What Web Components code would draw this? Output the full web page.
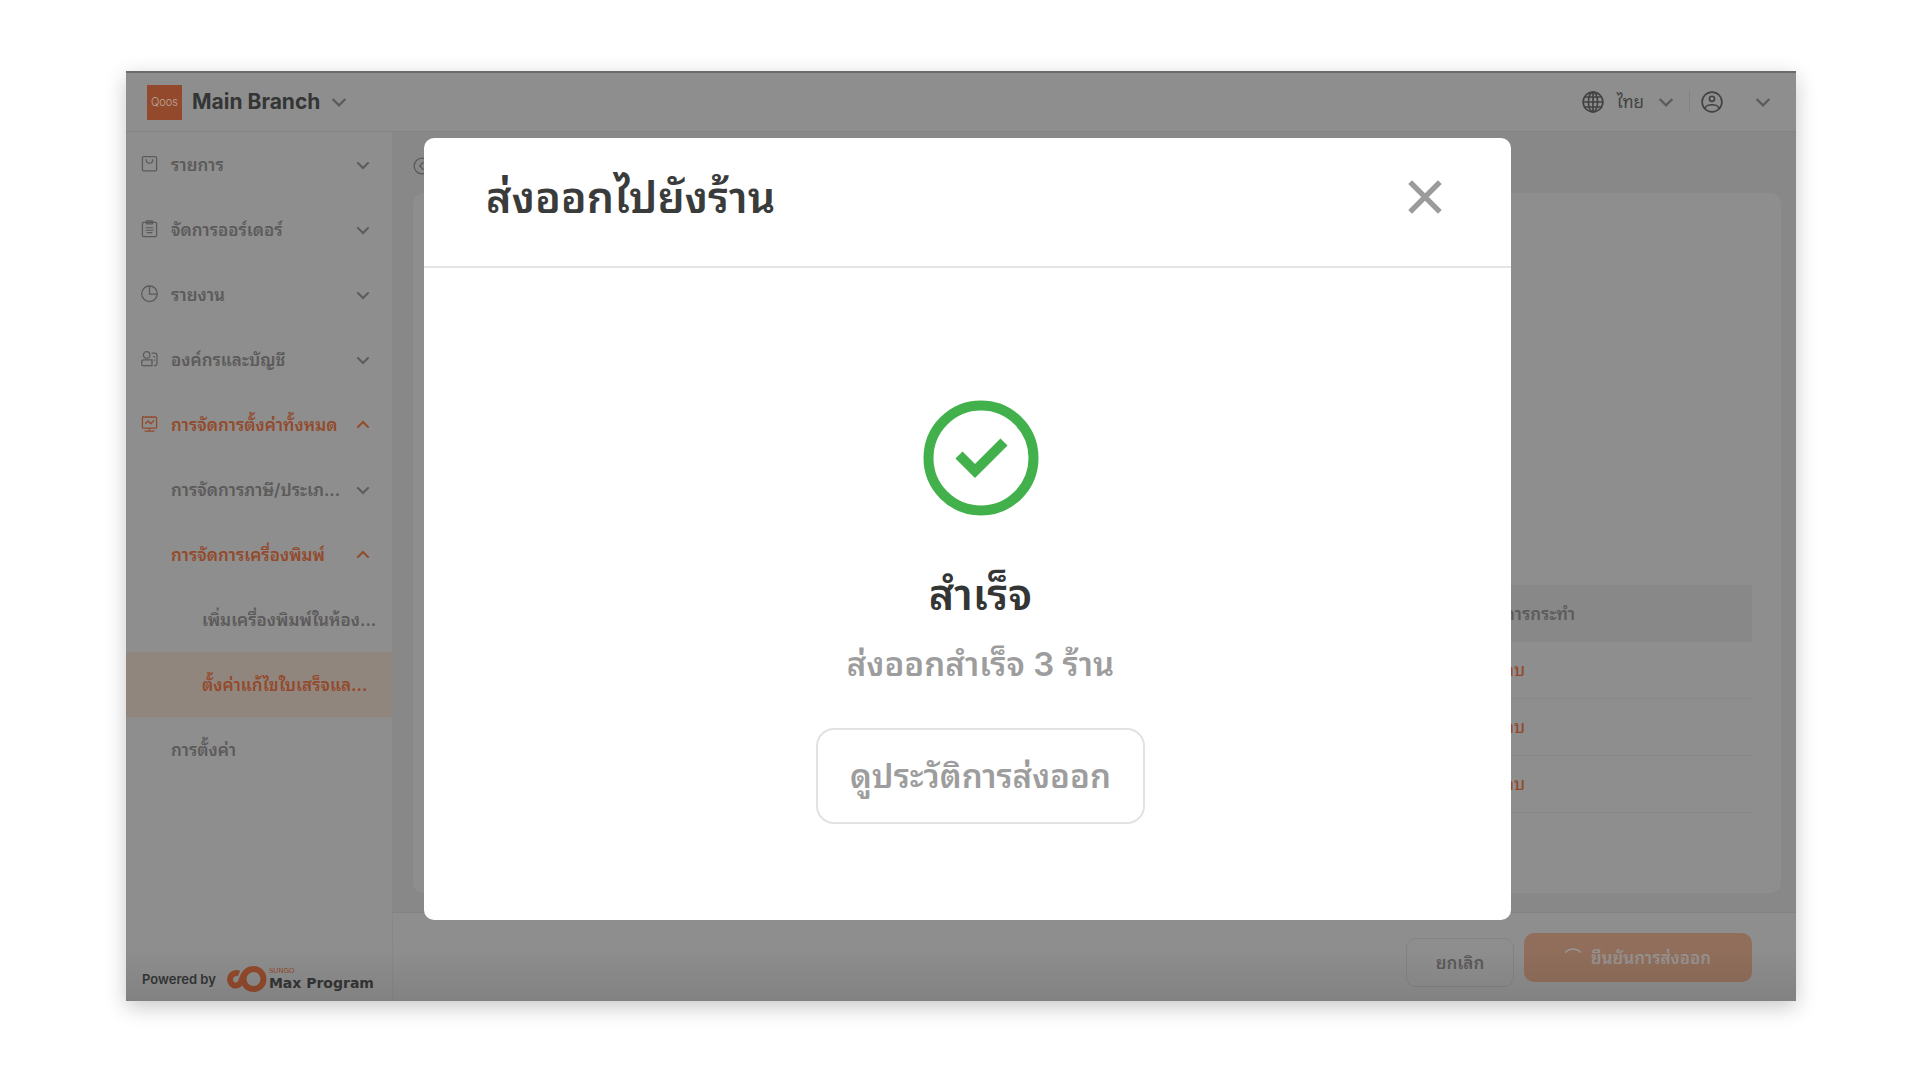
<!DOCTYPE html>
<html lang="th">
<head>
<meta charset="utf-8">
<title>ส่งออกไปยังร้าน</title>
<style>
  * { box-sizing: border-box; }
  body {
    --surface: #8e8e8e;
    --canvas: #888;
    --line: #838383;
    --muted: #5c5a5a;
    --strong: #343535;
    --brand: #934a2c;
    margin: 0;
    min-height: 100vh;
    display: flex;
    padding: 71px 124px 79px 126px;
    background: #fff;
    color: var(--muted);
    font: 600 17px/24px Inter, "Noto Sans Thai Looped", Loma, Waree, Garuda, "Noto Sans Thai", "Noto Sans", sans-serif;
  }
</style>
</head>
<body>

<app-window>
  <top-bar slot="header" branch="Main Branch" language="ไทย"></top-bar>
  <side-menu slot="menu">
    <menu-item icon="bag" arrow="down">รายการ</menu-item>
    <menu-item icon="clipboard" arrow="down">จัดการออร์เดอร์</menu-item>
    <menu-item icon="pie" arrow="down">รายงาน</menu-item>
    <menu-item icon="users" arrow="down">องค์กรและบัญชี</menu-item>
    <menu-item icon="monitor" arrow="up" active>การจัดการตั้งค่าทั้งหมด</menu-item>
    <menu-item arrow="down">การจัดการภาษี/ประเภ...</menu-item>
    <menu-item arrow="up" active>การจัดการเครื่องพิมพ์</menu-item>
    <menu-item level="2">เพิ่มเครื่องพิมพ์ในห้อง...</menu-item>
    <menu-item level="2" active selected>ตั้งค่าแก้ไขใบเสร็จแล...</menu-item>
    <menu-item>การตั้งค่า</menu-item>
  </side-menu>
  <store-panel slot="content"></store-panel>
  <action-bar slot="footer"></action-bar>
  <export-dialog slot="dialog" heading="ส่งออกไปยังร้าน">
    <result-message heading="สำเร็จ" action="ดูประวัติการส่งออก">ส่งออกสำเร็จ 3 ร้าน</result-message>
  </export-dialog>
</app-window>

<script>
const ICONS = {
  down: '<path d="M3.500 8l8.500 8.500 8.500-8.500" stroke-width="3"/>',
  up: '<path d="M3.500 16l8.500-8.500 8.500 8.500" stroke-width="3"/>',
  left: '<circle cx="12" cy="12" r="10.5"/><path d="M14 7l-5 5 5 5"/>',
  close: '<path d="M1.500 1.500l21 21M22.500 1.500L1.500 22.500" stroke-width="3.800"/>',
  bag: '<rect x="2" y="1" width="20" height="20" rx="1.5"/><path d="M7.500 4.500v1a4.500 4.500 0 0 0 9 0v-1"/>',
  clipboard: '<rect x="2" y="2" width="20" height="20" rx="1.500"/><rect x="7.500" y="0" width="9" height="4" rx="1"/><path d="M6.500 9.500h11M6.500 13h11M8 16.500h8" stroke-width="1.600"/>',
  pie: '<circle cx="12" cy="11" r="11"/><path d="M12 0v11.500h11"/>',
  users: '<circle cx="8" cy="5.500" r="4.500"/><path d="M1 19v-3.500a3 3 0 0 1 3-3h11.500v8H2.500A1.500 1.500 0 0 1 1 19zM15 3h5a2.500 2.500 0 0 1 2.500 2.500v12.500a2.500 2.500 0 0 1-2.500 2.500h-2M17 8h3M18 13h2"/>',
  monitor: '<rect x="2" y="1.500" width="20" height="15.500" rx="1"/><path d="M3 0v2M7 0v2M11 0v2M15 0v2M19 0v2M6 11l4-4 4 4 4.500-5M12 17v4M5 21.500h14" />',
  globe: '<circle cx="12" cy="12" r="10.800"/><ellipse cx="12" cy="12" rx="5" ry="10.800"/><path d="M1.200 12h21.600M12 1.200v21.600M3 6.500h18M3 17.500h18"/>',
  account: '<circle cx="12" cy="12" r="10.800"/><circle cx="12" cy="8.500" r="2.800"/><path d="M4.500 19.500c0-6 15-6 15 0"/>',
  spinner: '<path d="M0 4c6-7 18-7 24 0" stroke-width="2.400"/>',
};

class UiIcon extends HTMLElement {
  constructor() {
    super();
    this.attachShadow({ mode: 'open' });
  }

  connectedCallback() {
    this.shadowRoot.innerHTML = `
      <style>
        :host { display: inline-flex; width: 16px; height: 16px; flex: none; }
        svg { width: 100%; height: 100%; overflow: visible; }
      </style>
      <svg viewBox="0 0 24 24" fill="none" stroke="currentColor" stroke-width="1.8" aria-hidden="true">
        ${ICONS[this.getAttribute('name')] || ''}
      </svg>
    `;
  }
}

class AppWindow extends HTMLElement {
  constructor() {
    super();
    this.attachShadow({ mode: 'open' });
    this.shadowRoot.innerHTML = `
      <style>
        :host {
          position: relative;
          flex: 1;
          display: flex;
          flex-direction: column;
          border-top: 2px solid #6b6b6b;
          background: var(--surface);
          box-shadow: 0 6px 20px rgba(0, 0, 0, .22);
        }
        .body { flex: 1; display: flex; }
        .main { flex: 1; min-width: 0; display: flex; flex-direction: column; }
        .shade {
          position: absolute;
          inset: auto 0 0;
          height: 52px;
          background: linear-gradient(transparent, rgba(0, 0, 0, .09));
          pointer-events: none;
        }
        .overlay {
          position: absolute;
          inset: 0;
          display: flex;
          padding: 65px 285px 81px 298px;
        }
      </style>
      <slot name="header"></slot>
      <div class="body">
        <slot name="menu"></slot>
        <div class="main">
          <slot name="content"></slot>
          <slot name="footer"></slot>
        </div>
      </div>
      <div class="shade"></div>
      <div class="overlay"><slot name="dialog"></slot></div>
    `;
  }
}

class TopBar extends HTMLElement {
  constructor() {
    super();
    this.attachShadow({ mode: 'open' });
  }

  connectedCallback() {
    this.shadowRoot.innerHTML = `
      <style>
        :host {
          display: flex;
          align-items: center;
          justify-content: space-between;
          height: 59px;
          padding: 0 24px 0 21px;
          border-bottom: 1px solid var(--line);
        }
        div, button { display: flex; align-items: center; }
        button { border: 0; padding: 0; background: none; color: inherit; font: inherit; }
        .logo {
          width: 35px;
          height: 35px;
          justify-content: center;
          margin-right: 10px;
          background: var(--brand);
          color: #bca79d;
          font-size: 11px;
          font-weight: 300;
        }
        .branch { gap: 10px; color: var(--strong); font-size: 21px; font-weight: 700; }
        .branch ui-icon, .chevron { width: 18px; height: 18px; color: var(--muted); }
        .tools { color: #424242; }
        .globe, .account { width: 22px; height: 22px; }
        .lang { gap: 13px; font-weight: 400; }
        .user { gap: 31px; margin-left: 14px; padding-left: 11px; border-left: 1px solid var(--line); }
      </style>
      <div>
        <div class="logo">Qoos</div>
        <button class="branch">${this.getAttribute('branch')}<ui-icon name="down"></ui-icon></button>
      </div>
      <div class="tools">
        <button class="lang">
          <ui-icon class="globe" name="globe"></ui-icon>${this.getAttribute('language')}
          <ui-icon class="chevron" name="down"></ui-icon>
        </button>
        <button class="user" aria-label="Account">
          <ui-icon class="account" name="account"></ui-icon>
          <ui-icon class="chevron" name="down"></ui-icon>
        </button>
      </div>
    `;
  }
}

class SideMenu extends HTMLElement {
  constructor() {
    super();
    this.attachShadow({ mode: 'open' });
    this.shadowRoot.innerHTML = `
      <style>
        :host {
          display: flex;
          flex-direction: column;
          justify-content: space-between;
          width: 267px;
          border-right: 1px solid #888;
        }
        .powered {
          display: flex;
          align-items: center;
          gap: 8px;
          padding: 0 16px 8px;
          color: var(--strong);
          font-size: 13px;
          font-weight: 600;
          line-height: 28px;
          white-space: nowrap;
        }
        .brand { display: flex; align-items: center; gap: 2px; }
        .brand svg { width: 43px; height: 26px; }
        .name { display: flex; flex-direction: column; }
        small { color: var(--brand); font: 400 7px/7px "DejaVu Sans", sans-serif; }
        b { font: 700 14px/16px "DejaVu Sans", sans-serif; }
      </style>
      <nav><slot></slot></nav>
      <div class="powered">
        Powered by
        <div class="brand">
          <svg viewBox="0 0 43 26" fill="none" stroke="var(--brand)" stroke-width="6" aria-hidden="true">
            <circle cx="29.5" cy="13" r="10"/>
            <path d="M15 7.500A6.500 6.500 0 1 0 10 19.500C16 20 17 16 18 13S21 6 26 3.500"/>
          </svg>
          <span class="name"><small>SUNGO</small><b>Max Program</b></span>
        </div>
      </div>
    `;
  }
}

class MenuItem extends HTMLElement {
  constructor() {
    super();
    this.attachShadow({ mode: 'open' });
  }

  connectedCallback() {
    const icon = this.getAttribute('icon');
    const arrow = this.getAttribute('arrow');
    this.shadowRoot.innerHTML = `
      <style>
        :host { display: block; }
        :host([active]) { color: var(--brand); }
        :host([selected]) { background: #91867e; }
        button {
          display: flex;
          align-items: center;
          width: 100%;
          height: 65px;
          padding: 0 21px 0 15px;
          border: 0;
          background: none;
          color: inherit;
          font: inherit;
          text-align: left;
          white-space: nowrap;
        }
        .icon { width: 17px; height: 17px; margin-right: 13px; }
        :host([level="2"]) .icon { margin-right: 44px; }
        .label { flex: 1; min-width: 0; }
        .arrow { width: 16px; height: 16px; }
      </style>
      <button>
        <ui-icon class="icon" name="${icon || ''}"></ui-icon>
        <span class="label"><slot></slot></span>
        ${arrow ? `<ui-icon class="arrow" name="${arrow}"></ui-icon>` : ''}
      </button>
    `;
  }
}

class StorePanel extends HTMLElement {
  constructor() {
    super();
    this.attachShadow({ mode: 'open' });
    this.shadowRoot.innerHTML = `
      <style>
        :host {
          flex: 1;
          display: flex;
          flex-direction: column;
          padding: 6px 15px 19px 20px;
          background: var(--canvas);
        }
        .back { height: 55px; display: flex; align-items: center; }
        .back button { border: 0; padding: 0; background: none; color: inherit; display: flex; }
        .back ui-icon { width: 18px; height: 18px; }
        .card {
          flex: 1;
          display: flex;
          flex-direction: column;
          justify-content: flex-end;
          padding: 0 29px 80px;
          border-radius: 10px;
          background: var(--surface);
        }
        table { width: 100%; border-spacing: 0; }
        th, td {
          box-sizing: border-box;
          height: 57px;
          padding: 0 0 0 1062px;
          text-align: left;
          font-weight: 500;
        }
        th { background: var(--canvas); font-weight: 600; }
        td { border-bottom: 1px solid #878787; }
        a { color: var(--brand); text-decoration: none; }
      </style>
      <div class="back"><button aria-label="Back"><ui-icon name="left"></ui-icon></button></div>
      <div class="card">
        <table>
          <thead><tr><th>การกระทำ</th></tr></thead>
          <tbody>
            <tr><td><a href="#">ลบ</a></td></tr>
            <tr><td><a href="#">ลบ</a></td></tr>
            <tr><td><a href="#">ลบ</a></td></tr>
          </tbody>
        </table>
      </div>
    `;
  }
}

class ActionBar extends HTMLElement {
  constructor() {
    super();
    this.attachShadow({ mode: 'open' });
    this.shadowRoot.innerHTML = `
      <style>
        :host {
          display: flex;
          justify-content: flex-end;
          gap: 10px;
          height: 89px;
          box-sizing: border-box;
          padding: 20px 44px 14px;
          border-top: 1px solid var(--line);
        }
        button {
          display: flex;
          align-items: center;
          justify-content: center;
          gap: 10px;
          height: 49px;
          border: 1px solid #838383;
          border-radius: 10px;
          background: none;
          color: var(--muted);
          font: inherit;
        }
        .cancel { align-self: flex-end; width: 108px; }
        .confirm { width: 228px; border: 0; background: #906e5b; color: #979290; }
      </style>
      <button class="cancel">ยกเลิก</button>
      <button class="confirm"><ui-icon name="spinner"></ui-icon>ยืนยันการส่งออก</button>
    `;
  }
}

class ExportDialog extends HTMLElement {
  constructor() {
    super();
    this.attachShadow({ mode: 'open' });
  }

  connectedCallback() {
    this.shadowRoot.innerHTML = `
      <style>
        :host {
          flex: 1;
          display: flex;
          flex-direction: column;
          border-radius: 10px;
          background: #fff;
        }
        header {
          display: flex;
          align-items: center;
          justify-content: space-between;
          height: 130px;
          box-sizing: border-box;
          padding: 0 69px 10px 62px;
          border-bottom: 2px solid #e4e4e4;
        }
        h1 { margin: 0; color: #3a3b3b; font-size: 43px; line-height: 60px; font-weight: 600; }
        button { border: 0; padding: 0; background: none; color: #9b9b9b; display: flex; }
        ui-icon { width: 34px; height: 34px; }
      </style>
      <header>
        <h1>${this.getAttribute('heading')}</h1>
        <button aria-label="Close"><ui-icon name="close"></ui-icon></button>
      </header>
      <slot></slot>
    `;
  }
}

class ResultMessage extends HTMLElement {
  constructor() {
    super();
    this.attachShadow({ mode: 'open' });
  }

  connectedCallback() {
    this.shadowRoot.innerHTML = `
      <style>
        :host {
          display: flex;
          flex-direction: column;
          align-items: center;
          padding: 132px 0 0 26px;
          color: #9d9d9d;
          font-size: 33px;
          line-height: 48px;
          font-weight: 600;
        }
        svg { width: 116px; height: 116px; }
        h2 { margin: 48px 0 16px; color: #343535; font-size: 43px; line-height: 60px; font-weight: 600; }
        p { margin: 0; }
        button {
          margin-top: 40px;
          height: 96px;
          padding: 0 32px;
          border: 2px solid #e2e2e2;
          border-radius: 18px;
          background: #fff;
          color: inherit;
          font: inherit;
        }
      </style>
      <svg viewBox="0 0 116 116" fill="none" stroke="#42b14b" stroke-width="10" aria-hidden="true">
        <circle cx="58" cy="58" r="52.5"/>
        <path d="M36 55l16 16 29-29"/>
      </svg>
      <h2>${this.getAttribute('heading')}</h2>
      <p><slot></slot></p>
      <button>${this.getAttribute('action')}</button>
    `;
  }
}

customElements.define('ui-icon', UiIcon);
customElements.define('app-window', AppWindow);
customElements.define('top-bar', TopBar);
customElements.define('side-menu', SideMenu);
customElements.define('menu-item', MenuItem);
customElements.define('store-panel', StorePanel);
customElements.define('action-bar', ActionBar);
customElements.define('export-dialog', ExportDialog);
customElements.define('result-message', ResultMessage);
</script>
</body>
</html>
